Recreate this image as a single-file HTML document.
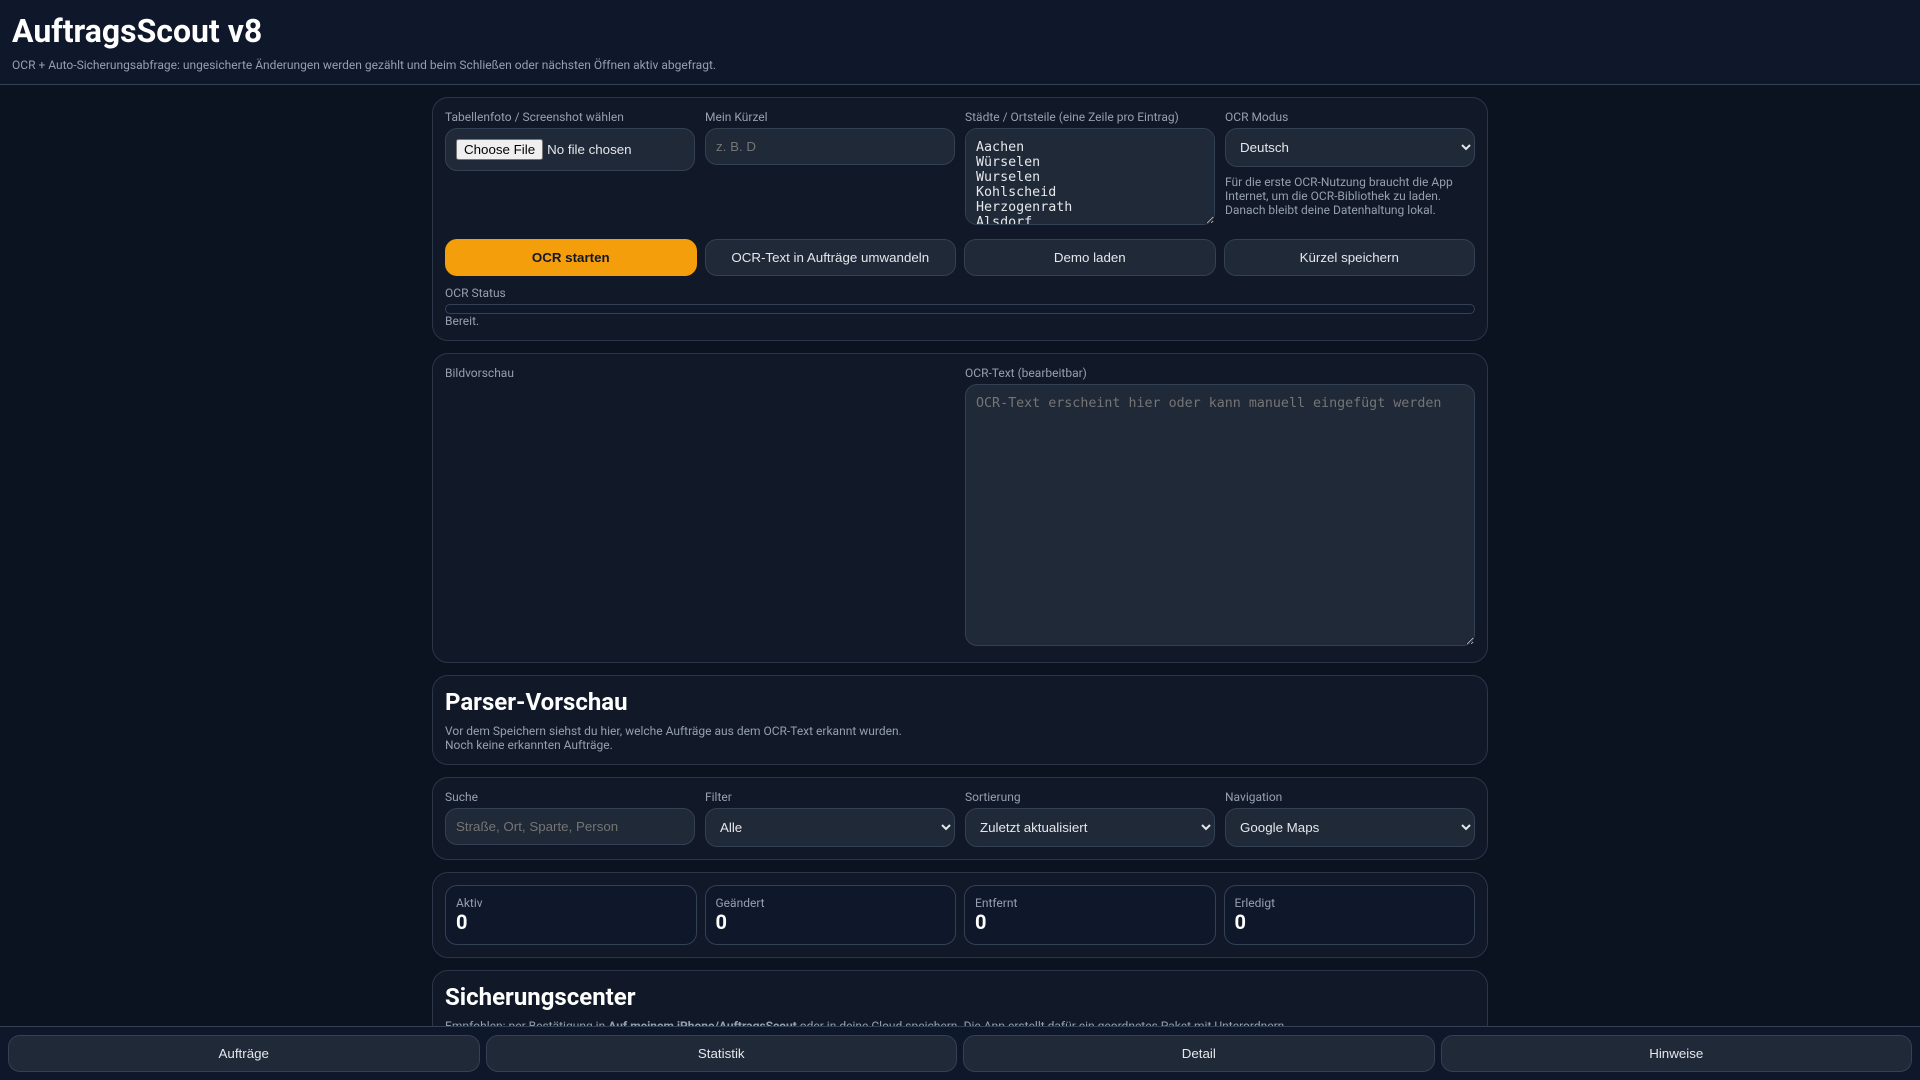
<!DOCTYPE html>
<html lang="de"><head><meta charset="utf-8"><title>AuftragsScout v8</title>
<style>
*{box-sizing:border-box}
html,body{margin:0;height:1080px;overflow:hidden}
body{background:#0b1220;color:#e5e7eb;font-family:Roboto,system-ui,"Liberation Sans",sans-serif;position:relative;width:1920px}
header{height:85px;padding:12px;background:#0f172a;border-bottom:1px solid #334155}
h1{margin:0;font-size:32px;line-height:38px;font-weight:700;color:#fff}
header p{margin:8px 0 0;font-size:12px;line-height:14px;color:#94a0b0}
.card{position:absolute;left:432px;width:1056px;background:#111827;border:1px solid #2b3648;border-radius:16px;padding:12px}
label,.lbl{display:block;font-size:12px;line-height:14px;color:#94a0b0;margin-bottom:4px}
.g4{display:grid;grid-template-columns:repeat(4,250px);gap:10px;align-items:start}
.b4{display:grid;grid-template-columns:repeat(4,251.5px);gap:8px}
input,select,textarea{display:block;width:100%;background:#1f2937;color:#e5e7eb;border:1px solid #334155;border-radius:12px;padding:10px;margin:0}
textarea{font-family:"DejaVu Sans Mono",monospace;font-size:13.33px;padding-top:11px}
input::placeholder,textarea::placeholder{color:#757575}
input[type=text]{height:37px}
input[type=file]{height:43px}
select{height:39px}
textarea{resize:vertical}
button.b{height:37px;background:#1f2937;color:#e5e7eb;border:1px solid #334155;border-radius:12px;font-family:"Liberation Sans",Arial,sans-serif;font-size:13.33px;padding:0}
button.p{background:#f59e0b;border-color:#f59e0b;color:#111827;font-weight:700}
small,.sm{font-size:12px;line-height:14px;color:#94a0b0}
.prog{height:10px;border:1px solid #334155;border-radius:6px;background:#0f172a;margin-top:-1px}
h2{margin:0;font-size:24px;line-height:28px;font-weight:700;color:#fff}
.stat{height:60px;background:#0f172a;border:1px solid #334155;border-radius:12px;padding:10px}
.stat span{display:block;font-size:12px;line-height:14px;color:#94a0b0}
.stat b{display:block;font-size:20px;line-height:22px;font-weight:700;color:#fff;margin-top:1px}
footer{position:absolute;left:0;top:1026px;width:1920px;height:54px;background:#0f172a;border-top:1px solid #334155;padding:8px;display:grid;grid-template-columns:repeat(4,471.5px);gap:6px}
</style></head><body>
<header>
<h1>AuftragsScout v8</h1>
<p>OCR + Auto-Sicherungsabfrage: ungesicherte Änderungen werden gezählt und beim Schließen oder nächsten Öffnen aktiv abgefragt.</p>
</header>

<section class="card" style="top:97px;height:244px">
<div class="g4" style="height:130px">
<div><label>Tabellenfoto / Screenshot wählen</label><input type="file"></div>
<div><label>Mein Kürzel</label><input type="text" placeholder="z. B. D"></div>
<div><label>Städte / Ortsteile (eine Zeile pro Eintrag)</label><textarea style="height:97px">Aachen
Würselen
Wurselen
Kohlscheid
Herzogenrath
Alsdorf
Baesweiler
Stolberg</textarea></div>
<div><label>OCR Modus</label><select><option>Deutsch</option></select><div class="sm" style="margin-top:8px">Für die erste OCR-Nutzung braucht die App Internet, um die OCR-Bibliothek zu laden. Danach bleibt deine Datenhaltung lokal.</div></div>
</div>
<div class="b4" style="margin-top:-1px"><button class="b p">OCR starten</button><button class="b">OCR-Text in Aufträge umwandeln</button><button class="b">Demo laden</button><button class="b">Kürzel speichern</button></div>
<div class="lbl" style="margin-top:10px;margin-bottom:5px">OCR Status</div>
<div class="prog"></div>
<div class="sm" style="margin-top:0">Bereit.</div>
</section>

<section class="card" style="top:353px;height:310px">
<div style="display:grid;grid-template-columns:510px 510px;gap:10px">
<div><label>Bildvorschau</label></div>
<div><label>OCR-Text (bearbeitbar)</label><textarea style="height:262px" placeholder="OCR-Text erscheint hier oder kann manuell eingefügt werden"></textarea></div>
</div>
</section>

<section class="card" style="top:675px;height:90px">
<h2>Parser-Vorschau</h2>
<div class="sm" style="margin-top:8px">Vor dem Speichern siehst du hier, welche Aufträge aus dem OCR-Text erkannt wurden.<br>Noch keine erkannten Aufträge.</div>
</section>

<section class="card" style="top:777px;height:83px">
<div class="g4">
<div><label>Suche</label><input type="text" placeholder="Straße, Ort, Sparte, Person"></div>
<div><label>Filter</label><select><option>Alle</option></select></div>
<div><label>Sortierung</label><select><option>Zuletzt aktualisiert</option></select></div>
<div><label>Navigation</label><select><option>Google Maps</option></select></div>
</div>
</section>

<section class="card" style="top:872px;height:86px">
<div class="b4">
<div class="stat"><span>Aktiv</span><b>0</b></div>
<div class="stat"><span>Geändert</span><b>0</b></div>
<div class="stat"><span>Entfernt</span><b>0</b></div>
<div class="stat"><span>Erledigt</span><b>0</b></div>
</div>
</section>

<section class="card" style="top:970px;height:110px;overflow:hidden">
<h2>Sicherungscenter</h2>
<div class="sm" style="margin-top:8px">Empfohlen: per Bestätigung in <b>Auf meinem iPhone/AuftragsScout</b> oder in deine Cloud speichern. Die App erstellt dafür ein geordnetes Paket mit Unterordnern.</div>
</section>

<footer><button class="b">Aufträge</button><button class="b">Statistik</button><button class="b">Detail</button><button class="b">Hinweise</button></footer>
</body></html>
